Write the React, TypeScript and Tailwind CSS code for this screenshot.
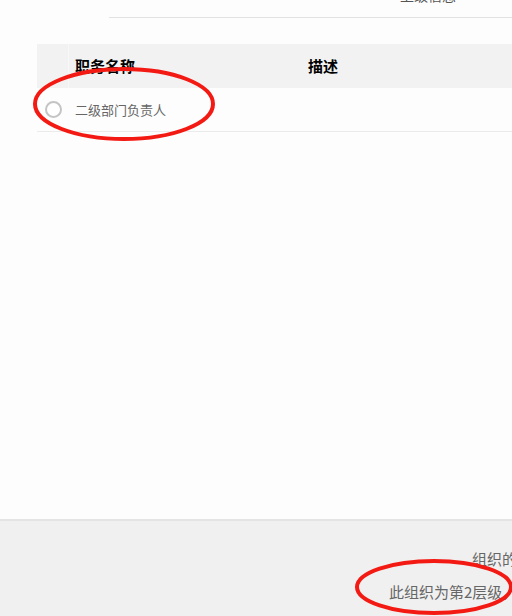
import React from "react";

export default function App() {
  return (
    <div
      className="relative w-[512px] h-[616px] overflow-hidden bg-[#fdfdfd] flex flex-col"
      style={{ fontFamily: '"Microsoft YaHei", "Noto Sans CJK SC", "Noto Sans", sans-serif' }}
    >
      {/* top clipped area */}
      <div className="h-[18px] flex">
        <div className="w-[109px]" />
        <div className="flex-1 border-b border-[#e2e2e2] relative overflow-hidden">
          <div className="absolute left-[291px] top-[-13px] text-[14px] leading-[17px] text-[#555] whitespace-nowrap">
            上级信息
          </div>
        </div>
      </div>

      {/* table */}
      <div className="mt-[26px] ml-[37px]">
        <div className="h-[44px] bg-[#f2f2f2] flex items-center text-[15px] font-bold text-black">
          <div className="w-[32px] h-full border-r border-[#f7f7f7]" />
          <div className="w-[239px] pl-[6px]">职务名称</div>
          <div className="flex-1">描述</div>
        </div>
        <div className="h-[44px] flex items-center border-b border-[#ebebeb]">
          <div className="w-[32px] flex justify-start pl-[8px]">
            <div className="w-[17px] h-[17px] rounded-full border-2 border-[#c4c4c4] bg-white" />
          </div>
          <div className="pl-[6px] text-[13px] text-[#666]">二级部门负责人</div>
        </div>
      </div>

      <div className="flex-1" />

      {/* footer */}
      <div className="h-[97px] bg-[#f0f0f0] border-t-2 border-[#e4e4e4] relative text-[15px] text-[#666] whitespace-nowrap">
        <div className="absolute left-[472px] top-[27px]">组织的层级说明</div>
        <div className="absolute left-[389px] top-[60px]">此组织为第2层级，不可再添加下级</div>
      </div>

      {/* annotation ellipses */}
      <svg className="absolute left-0 top-0 pointer-events-none" width="512" height="616" viewBox="0 0 512 616">
        <ellipse cx="124" cy="104" rx="89" ry="35" fill="none" stroke="#f41a14" strokeWidth="4" />
        <ellipse cx="434" cy="587" rx="77" ry="26" fill="none" stroke="#f41a14" strokeWidth="4" />
      </svg>
    </div>
  );
}
